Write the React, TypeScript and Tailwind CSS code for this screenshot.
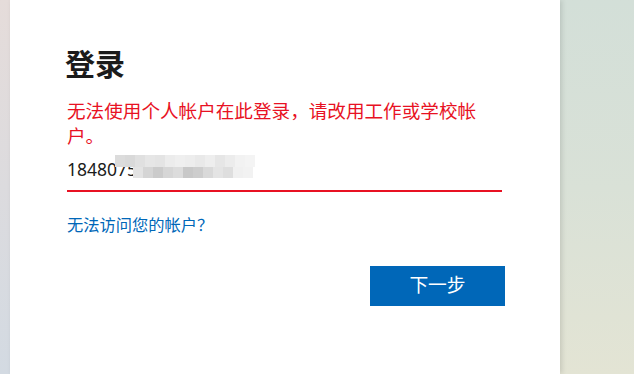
import React from "react";

const font = { fontFamily: '"Noto Sans", "Noto Sans CJK SC", sans-serif' };

// pixelated redaction over the typed number
const topRow = ["#dcdcdc", "#d9d9d9", "#e0e0e0", "#e6e6e6", "#e4e4e4", "#ececec", "#efefef", "#ededed", "#e9e9e9", "#eeeeee", "#e6e6e6", "#ececec", "#f2f2f2", "#f4f4f4"];
const bottomRow = ["#e3e3e3", "#d5d5d5", "#cbcbcb", "#d6d6d6", "#dcdcdc", "#c8c8c8", "#cdcdcd", "#d9d9d9", "#e4e4e4", "#dedede", "#f0f0f0", "#f2f2f2"];

const App = () => {
  return (
    <div className="flex h-[374px] w-[634px] overflow-hidden bg-white" style={font}>
      <div className="w-[10px] shrink-0 bg-gradient-to-b from-[#e5dcda] via-[#dcdbde] to-[#d3dae2]"></div>

      <div className="relative z-10 w-[550px] shrink-0 bg-white px-[55px] pt-[46px] shadow-[2px_0_5px_rgba(0,0,0,0.12)]">
        <h1 className="text-[30px] font-bold leading-[36px] text-[#1b1b1b]">登录</h1>

        <div className="mt-[16px] pl-[2px] text-[18.6px] leading-[25px] text-[#e81123]">
          无法使用个人帐户在此登录，请改用工作或学校帐户。
        </div>

        <div className="relative flex h-[42px] items-center pl-[2px] text-[17.5px] text-[#1b1b1b]">
          <span>1848075</span>
          <div className="absolute left-[50px] top-[7px] flex">
            {topRow.map((c, j) => (
              <span key={j} className="block h-[12px] w-[10px]" style={{ background: c }}></span>
            ))}
          </div>
          <div className="absolute left-[68px] top-[19px] flex">
            {bottomRow.map((c, j) => (
              <span key={j} className="block h-[11px] w-[10px]" style={{ background: c }}></span>
            ))}
          </div>
        </div>
        <div className="ml-[2px] mr-[3px] h-[1.5px] bg-[#e81123]"></div>

        <div className="mt-[23px] pl-[2px] text-[16.25px] leading-[20px] text-[#0067b8]">
          <a href="#">无法访问您的帐户？</a>
        </div>

        <div className="mt-[31px] flex justify-end">
          <button className="h-[40px] w-[135px] bg-[#0067b8] text-[18.75px] text-white">下一步</button>
        </div>
      </div>

      <div className="flex-1 bg-gradient-to-b from-[#d3dfd8] via-[#d9e1d7] to-[#e3e4d4]"></div>
    </div>
  );
};

export default App;
